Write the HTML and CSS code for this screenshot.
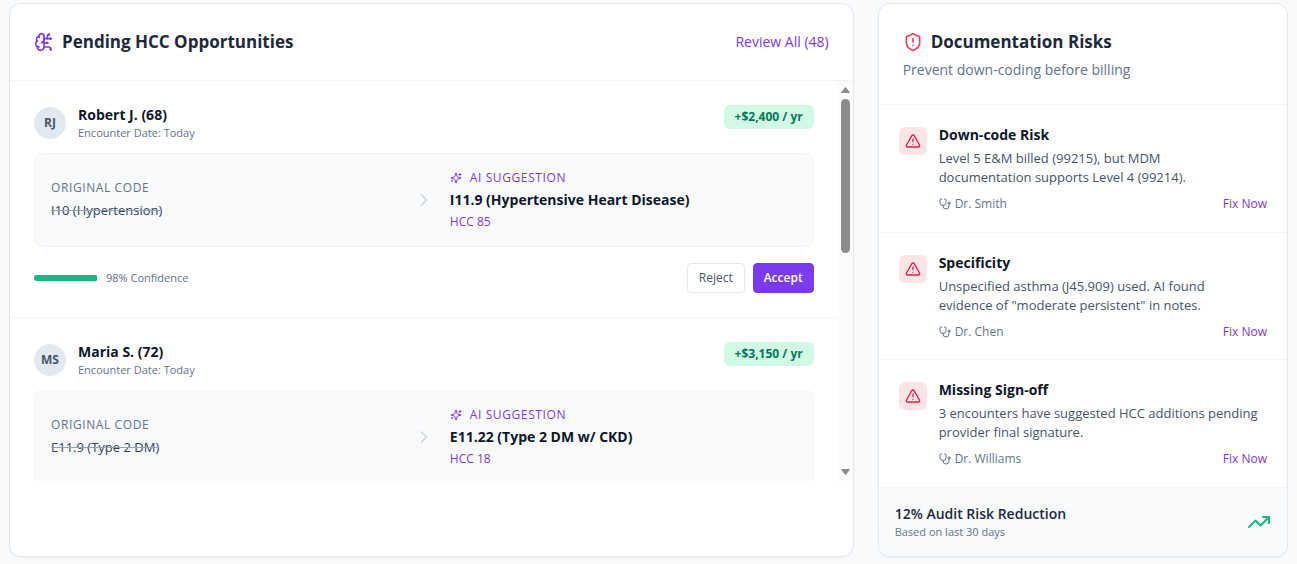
FILE: index.html
```html
<!DOCTYPE html>
<html lang="en">
<head>
  <meta charset="UTF-8">
  <meta name="viewport" content="width=device-width, initial-scale=1.0">
  <title>HCC Opportunities</title>
  <link rel="stylesheet" href="styles.css">
</head>
<body>
  <!-- Shared icons -->
  <svg class="icon-defs" width="0" height="0" aria-hidden="true">
    <symbol id="chevron" viewBox="0 0 24 24"><path d="m9 18 6-6-6-6"/></symbol>
    <symbol id="sparkles" viewBox="0 0 24 24">
      <path d="M9.937 15.5A2 2 0 0 0 8.5 14.063l-6.135-1.582a.5.5 0 0 1 0-.962L8.5 9.936A2 2 0 0 0 9.937 8.5l1.582-6.135a.5.5 0 0 1 .963 0L14.063 8.5A2 2 0 0 0 15.5 9.937l6.135 1.581a.5.5 0 0 1 0 .964L15.5 14.063a2 2 0 0 0-1.437 1.437l-1.582 6.135a.5.5 0 0 1-.963 0z"/>
      <path d="M20 3v4"/><path d="M22 5h-4"/><path d="M4 17v2"/><path d="M5 18H3"/>
    </symbol>
    <symbol id="alert" viewBox="0 0 24 24">
      <path d="m21.73 18-8-14a2 2 0 0 0-3.48 0l-8 14A2 2 0 0 0 4 21h16a2 2 0 0 0 1.73-3"/>
      <path d="M12 9v4"/><path d="M12 17h.01"/>
    </symbol>
    <symbol id="stethoscope" viewBox="0 0 24 24">
      <path d="M4.8 2.3A.3.3 0 1 0 5 2H4a2 2 0 0 0-2 2v5a6 6 0 0 0 12 0V4a2 2 0 0 0-2-2h-1a.2.2 0 1 0 .3.3"/>
      <path d="M8 15v1a6 6 0 0 0 12 0v-4"/><circle cx="20" cy="10" r="2"/>
    </symbol>
  </svg>

  <main class="dashboard">
    <section class="card opportunities">
      <header class="card-header header-row">
        <h2 class="card-title">
          <svg class="icon icon-20 violet" viewBox="0 0 24 24">
            <path d="M12 5a3 3 0 1 0-5.997.125 4 4 0 0 0-2.526 5.77 4 4 0 0 0 .556 6.588A4 4 0 1 0 12 18Z"/>
            <path d="M9 13a4.5 4.5 0 0 0 3-4"/><path d="M6.003 5.125A3 3 0 0 0 6.401 6.5"/>
            <path d="M3.477 10.896a4 4 0 0 1 .585-.396"/><path d="M6 18a4 4 0 0 1-1.967-.516"/>
            <path d="M12 13h4"/><path d="M12 18h6a2 2 0 0 1 2 2v1"/><path d="M12 8h8"/><path d="M16 8V5a2 2 0 0 1 2-2"/>
            <circle cx="16" cy="13" r=".5"/><circle cx="18" cy="3" r=".5"/><circle cx="20" cy="21" r=".5"/><circle cx="20" cy="8" r=".5"/>
          </svg>
          Pending HCC Opportunities
        </h2>
        <button type="button" class="link-btn review-all">Review All (48)</button>
      </header>

      <div class="scroll-area">
        <div class="patient-list">
          <article class="patient">
            <div class="patient-top">
              <div class="avatar">RJ</div>
              <div class="patient-info">
                <h3 class="item-title">Robert J. (68)</h3>
                <p class="small-text">Encounter Date: Today</p>
              </div>
              <span class="value-badge">+$2,400 / yr</span>
            </div>
            <div class="code-box">
              <div class="code-col">
                <p class="code-label">Original Code</p>
                <p class="old-code">I10 (Hypertension)</p>
              </div>
              <svg class="icon icon-20 chevron"><use href="#chevron"/></svg>
              <div class="code-col">
                <p class="code-label ai-label"><svg class="icon icon-12"><use href="#sparkles"/></svg>AI Suggestion</p>
                <p class="new-code">I11.9 (Hypertensive Heart Disease)</p>
                <p class="hcc">HCC 85</p>
              </div>
            </div>
            <div class="patient-bottom">
              <div class="bar"><div class="bar-fill" style="width: 98%"></div></div>
              <span class="small-text">98% Confidence</span>
              <div class="actions">
                <button type="button" class="btn btn-reject">Reject</button>
                <button type="button" class="btn btn-accept">Accept</button>
              </div>
            </div>
          </article>

          <article class="patient">
            <div class="patient-top">
              <div class="avatar">MS</div>
              <div class="patient-info">
                <h3 class="item-title">Maria S. (72)</h3>
                <p class="small-text">Encounter Date: Today</p>
              </div>
              <span class="value-badge">+$3,150 / yr</span>
            </div>
            <div class="code-box">
              <div class="code-col">
                <p class="code-label">Original Code</p>
                <p class="old-code">E11.9 (Type 2 DM)</p>
              </div>
              <svg class="icon icon-20 chevron"><use href="#chevron"/></svg>
              <div class="code-col">
                <p class="code-label ai-label"><svg class="icon icon-12"><use href="#sparkles"/></svg>AI Suggestion</p>
                <p class="new-code">E11.22 (Type 2 DM w/ CKD)</p>
                <p class="hcc">HCC 18</p>
              </div>
            </div>
          </article>
        </div>
        <div class="scrollbar" aria-hidden="true">
          <svg class="arrow" viewBox="0 0 9 6"><path d="M4.500 0.500 8.500 5.500H.5z"/></svg>
          <div class="track"><div class="thumb"></div></div>
          <svg class="arrow" viewBox="0 0 9 6"><path d="M.5.5h8L4.500 5.500z"/></svg>
        </div>
      </div>
    </section>

    <section class="card risks">
      <header class="card-header">
        <h2 class="card-title">
          <svg class="icon icon-20 rose" viewBox="0 0 24 24">
            <path d="M20 13c0 5-3.500 7.500-7.660 8.950a1 1 0 0 1-.67-.01C7.500 20.500 4 18 4 13V6a1 1 0 0 1 1-1c2 0 4.500-1.200 6.240-2.720a1.170 1.170 0 0 1 1.520 0C14.510 3.810 17 5 19 5a1 1 0 0 1 1 1z"/>
            <path d="M12 8v4"/><path d="M12 16h.01"/>
          </svg>
          Documentation Risks
        </h2>
        <p class="subtitle">Prevent down-coding before billing</p>
      </header>

      <div class="risk-list">
        <article class="risk">
          <div class="risk-icon"><svg class="icon icon-16"><use href="#alert"/></svg></div>
          <div class="risk-body">
            <h3 class="item-title">Down-code Risk</h3>
            <p class="risk-text">Level 5 E&amp;M billed (99215), but MDM<br>documentation supports Level 4 (99214).</p>
            <div class="risk-meta">
              <span class="doctor"><svg class="icon icon-12"><use href="#stethoscope"/></svg>Dr. Smith</span>
              <button type="button" class="link-btn">Fix Now</button>
            </div>
          </div>
        </article>
        <article class="risk">
          <div class="risk-icon"><svg class="icon icon-16"><use href="#alert"/></svg></div>
          <div class="risk-body">
            <h3 class="item-title">Specificity</h3>
            <p class="risk-text">Unspecified asthma (J45.909) used. AI found<br>evidence of "moderate persistent" in notes.</p>
            <div class="risk-meta">
              <span class="doctor"><svg class="icon icon-12"><use href="#stethoscope"/></svg>Dr. Chen</span>
              <button type="button" class="link-btn">Fix Now</button>
            </div>
          </div>
        </article>
        <article class="risk">
          <div class="risk-icon"><svg class="icon icon-16"><use href="#alert"/></svg></div>
          <div class="risk-body">
            <h3 class="item-title">Missing Sign-off</h3>
            <p class="risk-text">3 encounters have suggested HCC additions pending<br>provider final signature.</p>
            <div class="risk-meta">
              <span class="doctor"><svg class="icon icon-12"><use href="#stethoscope"/></svg>Dr. Williams</span>
              <button type="button" class="link-btn">Fix Now</button>
            </div>
          </div>
        </article>
      </div>

      <footer class="card-footer">
        <div>
          <p class="footer-title">12% Audit Risk Reduction</p>
          <p class="small-text">Based on last 30 days</p>
        </div>
        <svg class="icon icon-24 green" viewBox="0 0 24 24"><path d="M22 7 13.500 15.500 8.500 10.500 2 17"/><path d="M16 7h6v6"/></svg>
      </footer>
    </section>
  </main>
</body>
</html>
```
FILE: styles.css
```css
* {
  box-sizing: border-box;
}
body {
  margin: 0;
  background-color: #f8fafc;
  color: #0f172a;
  font-family: "Segoe UI", "Open Sans", sans-serif;
  font-size: 14px;
  line-height: 20px;
}
h2, h3, p {
  margin: 0;
}
button {
  font-family: inherit;
  cursor: pointer;
}
.icon-defs {
  position: absolute;
}

/* Icons */
.icon {
  flex-shrink: 0;
  fill: none;
  stroke: currentColor;
  stroke-width: 2;
  stroke-linecap: round;
  stroke-linejoin: round;
}
.icon-12 {
  width: 12px;
  height: 12px;
}
.icon-16 {
  width: 16px;
  height: 16px;
}
.icon-20 {
  width: 20px;
  height: 20px;
}
.icon-24 {
  width: 24px;
  height: 24px;
}
.violet {
  color: #7c3aed;
}
.rose {
  color: #f43f5e;
}
.green {
  color: #10b981;
}

/* Layout */
.dashboard {
  display: grid;
  grid-template-columns: repeat(3, minmax(0, 1fr));
  gap: 24px;
  min-height: 100vh;
  padding: 3px 9px 7px;
}
.card {
  display: flex;
  flex-direction: column;
  overflow: hidden;
  background-color: #fff;
  border: 1px solid #e2e8f0;
  border-radius: 12px;
  box-shadow: 0 1px 2px rgba(0, 0, 0, 0.05);
}
.opportunities {
  grid-column: span 2;
}
.card-header {
  padding: 24px;
  border-bottom: 1px solid #f1f5f9;
}
.header-row {
  display: flex;
  align-items: center;
  justify-content: space-between;
}
.card-title {
  display: flex;
  align-items: center;
  gap: 8px;
  color: #1e293b;
  font-size: 17px;
  font-weight: 700;
  line-height: 28px;
}
.subtitle {
  margin-top: 4px;
  color: #64748b;
}
.item-title {
  font-size: 14px;
  font-weight: 700;
  line-height: 20px;
}
.small-text {
  color: #64748b;
  font-size: 11px;
  line-height: 16px;
}
.link-btn {
  padding: 0;
  border: none;
  background: none;
  color: #7c3aed;
  font-size: 12px;
  font-weight: 500;
  line-height: 16px;
}
.review-all {
  font-size: 14px;
  line-height: 20px;
}

/* Pending opportunities */
.scroll-area {
  display: flex;
  height: 400px;
}
.patient-list {
  flex: 1;
  overflow-y: auto;
  scrollbar-width: none;
}
.patient {
  padding: 24px;
  border-bottom: 1px solid #f1f5f9;
}
.patient-top {
  display: flex;
  align-items: center;
  gap: 12px;
  margin-bottom: 12px;
}
.avatar {
  display: flex;
  align-items: center;
  justify-content: center;
  width: 32px;
  height: 32px;
  border-radius: 50%;
  background-color: #e2e8f0;
  color: #475569;
  font-size: 12px;
  font-weight: 700;
}
.patient-info {
  flex: 1;
}
.value-badge {
  align-self: flex-start;
  padding: 4px 11px;
  border-radius: 6px;
  background-color: #d1fae5;
  color: #047857;
  font-size: 12px;
  font-weight: 700;
  line-height: 16px;
}
.code-box {
  display: grid;
  grid-template-columns: 1fr auto 1fr;
  align-items: center;
  gap: 16px;
  padding: 16px;
  border: 1px solid #f1f5f9;
  border-radius: 8px;
  background-color: #f8fafc;
}
.code-col {
  display: flex;
  flex-direction: column;
  align-items: flex-start;
  gap: 4px;
}
.code-label {
  color: #64748b;
  font-size: 12px;
  font-weight: 500;
  line-height: 16px;
  letter-spacing: 0.05em;
  text-transform: uppercase;
}
.ai-label {
  display: flex;
  align-items: center;
  gap: 8px;
  color: #7c3aed;
}
.old-code {
  color: #334155;
  font-size: 13px;
  text-decoration: line-through #94a3b8;
}
.new-code {
  font-weight: 700;
}
.hcc {
  color: #7c3aed;
  font-size: 12px;
  font-weight: 500;
  line-height: 16px;
}
.chevron {
  color: #cbd5e1;
}
.patient-bottom {
  display: flex;
  align-items: center;
  gap: 8px;
  margin-top: 16px;
}
.bar {
  width: 64px;
  height: 6px;
  overflow: hidden;
  border-radius: 3px;
  background-color: #f1f5f9;
}
.bar-fill {
  height: 100%;
  background-color: #10b981;
}
.actions {
  display: flex;
  gap: 8px;
  margin-left: auto;
}
.btn {
  padding: 6px 11px;
  border: 1px solid #e2e8f0;
  border-radius: 4px;
  font-size: 12px;
  font-weight: 500;
  line-height: 16px;
}
.btn-reject {
  background-color: #fff;
  color: #475569;
}
.btn-accept {
  padding: 6px 10px;
  border-color: #7c3aed;
  background-color: #7c3aed;
  color: #fff;
  font-weight: 600;
}

/* Scrollbar beside the list */
.scrollbar {
  display: flex;
  flex-direction: column;
  align-items: center;
  gap: 3px;
  width: 15px;
  padding: 6px 0;
  background-color: #fcfcfc;
}
.arrow {
  width: 9px;
  height: 6px;
  fill: #8b8b8b;
  stroke: #8b8b8b;
  stroke-linejoin: round;
}
.track {
  flex: 1;
  width: 9px;
  padding-top: 3px;
}
.thumb {
  height: 154px;
  border-radius: 5px;
  background-color: #8b8b8b;
}

/* Documentation risks */
.risk-list {
  display: flex;
  flex: 1;
  flex-direction: column;
}
.risk {
  display: flex;
  flex-grow: 1;
  gap: 12px;
  padding: 20px 20px 19px;
}
.risk + .risk {
  border-top: 1px solid #f1f5f9;
}
.risk-icon {
  display: flex;
  align-items: center;
  justify-content: center;
  width: 28px;
  height: 28px;
  margin-top: 2px;
  border-radius: 6px;
  background-color: #ffe4e6;
  color: #e11d48;
}
.risk-body {
  flex: 1;
}
.risk-text {
  margin-top: 4px;
  color: #475569;
  font-size: 13px;
  line-height: 19px;
}
.risk-meta {
  display: flex;
  align-items: center;
  justify-content: space-between;
  margin-top: 9px;
}
.doctor {
  display: flex;
  align-items: center;
  gap: 4px;
  color: #64748b;
  font-size: 12px;
  font-weight: 500;
  line-height: 16px;
}
.card-footer {
  display: flex;
  align-items: center;
  justify-content: space-between;
  padding: 16px;
  border-top: 1px solid #f1f5f9;
  background-color: #f8fafc;
}
.footer-title {
  color: #1e293b;
  font-weight: 600;
}
```
